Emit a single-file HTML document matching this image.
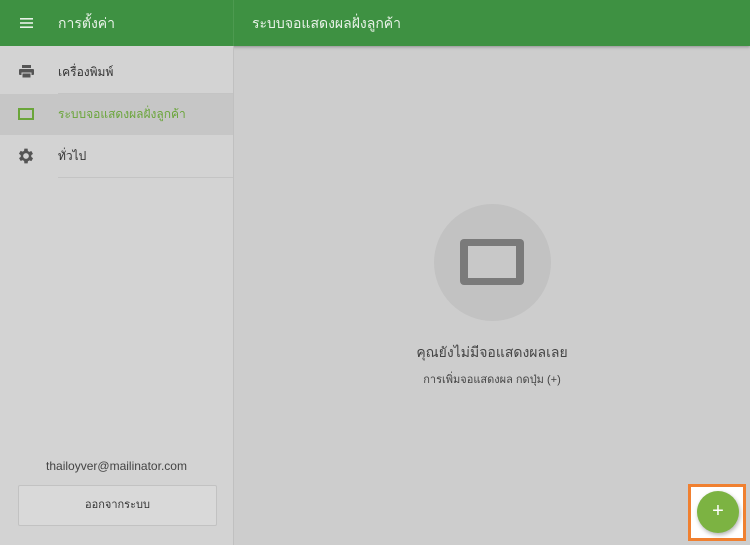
<!DOCTYPE html><html><head><meta charset="utf-8"><style>
body{margin:0;width:750px;height:545px;overflow:hidden;background:#cdcdcd;font-family:"Liberation Sans","DejaVu Sans",sans-serif;position:relative}
.hdr{position:absolute;left:0;top:0;width:750px;height:46px;background:#3e9142;box-shadow:0 1px 3px rgba(0,0,0,.3);color:#e8f2e8;font-size:14px}
.side{position:absolute;left:0;top:46px;width:233px;height:499px;background:#d3d3d3;border-right:1px solid #c0c0c0}
.item{position:absolute;left:0;width:233px;height:41px;font-size:12px;color:#333}
.item span{position:absolute;left:58px;top:11px}
.sep{position:absolute;left:58px;width:175px;height:1px;background:#c4c4c4}
</style></head><body>
<div class="hdr">
<svg style="position:absolute;left:20px;top:18px" width="13" height="10"><rect y="0" width="13" height="1.6" fill="#e8f2e8"/><rect y="4.2" width="13" height="1.6" fill="#e8f2e8"/><rect y="8.4" width="13" height="1.6" fill="#e8f2e8"/></svg>
<span style="position:absolute;left:58px;top:13px">การตั้งค่า</span>
<div style="position:absolute;left:233px;top:0;width:1px;height:46px;background:#4d9a50"></div>
<span style="position:absolute;left:252px;top:13px">ระบบจอแสดงผลฝั่งลูกค้า</span>
</div>
<div class="side">
<div class="item" style="top:6px"><svg style="position:absolute;left:19px;top:13px" width="15" height="14"><rect x="3" y="0" width="9" height="3" fill="#555"/><rect x="0" y="4" width="15" height="6" rx="1" fill="#555"/><rect x="3" y="8" width="9" height="5" fill="#555" stroke="#d3d3d3" stroke-width="1"/></svg><span>เครื่องพิมพ์</span></div>
<div class="sep" style="top:47px"></div>
<div class="item" style="top:48px;height:41px;background:#c6c6c6"><svg style="position:absolute;left:18px;top:14px" width="16" height="12"><rect x="1" y="1" width="14" height="10" fill="none" stroke="#6aa53a" stroke-width="2"/></svg><span style="color:#6aa53a">ระบบจอแสดงผลฝั่งลูกค้า</span></div>
<div class="item" style="top:90px"><svg style="position:absolute;left:17px;top:11px" width="18" height="18" viewBox="2 1 22 22"><path fill="#555" d="M19.4 13a7.5 7.5 0 0 0 0-2l2.1-1.6-2-3.5-2.5 1a7 7 0 0 0-1.7-1L15 3h-4l-.4 2.7a7 7 0 0 0-1.7 1l-2.5-1-2 3.5L6.6 11a7.5 7.5 0 0 0 0 2l-2.1 1.6 2 3.5 2.5-1a7 7 0 0 0 1.7 1L11 21h4l.4-2.7a7 7 0 0 0 1.7-1l2.5 1 2-3.5zM13 15.5a3.5 3.5 0 1 1 0-7 3.5 3.5 0 0 1 0 7z"/></svg><span>ทั่วไป</span></div>
<div class="sep" style="top:131px"></div>
<div style="position:absolute;left:0;width:233px;top:413px;text-align:center;font-size:12px;color:#444">thailoyver@mailinator.com</div>
<div style="position:absolute;left:18px;top:439px;width:197px;height:39px;background:#d9d9d9;border:1px solid #c2c2c2;border-radius:2px;text-align:center;line-height:39px;font-size:11px;color:#333">ออกจากระบบ</div>
</div>
<div style="position:absolute;left:434px;top:204px;width:117px;height:117px;border-radius:50%;background:#c2c2c2"></div>
<div style="position:absolute;left:460px;top:239px;width:64px;height:46px;background:#7a7a7a;border-radius:4px"><div style="position:absolute;left:8px;top:7px;width:48px;height:32px;background:#c8c8c8"></div></div>
<div style="position:absolute;left:234px;width:516px;top:342px;text-align:center;font-size:14px;color:#444">คุณยังไม่มีจอแสดงผลเลย</div>
<div style="position:absolute;left:234px;width:516px;top:370px;text-align:center;font-size:11px;color:#444">การเพิ่มจอแสดงผล กดปุ่ม (+)</div>
<div style="position:absolute;left:688px;top:484px;width:52px;height:51px;border:3px solid #f08030;background:#fff"></div>
<div style="position:absolute;left:697px;top:491px;width:42px;height:42px;border-radius:50%;background:#7cb342;box-shadow:1px 2px 4px rgba(0,0,0,.3);color:#fff;text-align:center;line-height:40px;font-size:20px">+</div>
</body></html>
